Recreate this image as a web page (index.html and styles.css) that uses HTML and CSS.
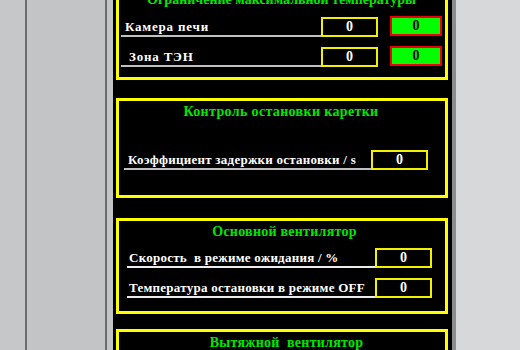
FILE: index.html
```html
<!DOCTYPE html>
<html lang="ru">
<head>
    <meta charset="UTF-8">
    <meta name="viewport" content="width=device-width, initial-scale=1.0">
    <title>Параметры печи</title>
    <link rel="stylesheet" href="styles.css">
</head>
<body>
    <div class="shell">
        <div class="gutter"></div>
        <div class="rail"></div>
        <div class="side"></div>
        <div class="rail"></div>
        <div class="pad"></div>
        <main class="panel">
            <section class="box box-limit">
                <h3 class="title">Ограничение максимальной температуры</h3>
                <div class="row">
                    <span class="label">Камера печи</span>
                    <span class="val">0</span>
                    <span class="lamp">0</span>
                </div>
                <div class="row">
                    <span class="label">&nbsp;Зона ТЭН</span>
                    <span class="val">0</span>
                    <span class="lamp">0</span>
                </div>
            </section>
            <section class="box box-stop">
                <h3 class="title">Контроль остановки каретки</h3>
                <div class="row">
                    <span class="label">Коэффициент задержки остановки / s</span>
                    <span class="val">0</span>
                </div>
            </section>
            <section class="box box-fan">
                <h3 class="title">Основной вентилятор</h3>
                <div class="row">
                    <span class="label light">Скорость &nbsp;в режиме ожидания / %</span>
                    <span class="val">0</span>
                </div>
                <div class="row">
                    <span class="label light">Температура остановки в режиме OFF</span>
                    <span class="val">0</span>
                </div>
            </section>
            <section class="box box-exhaust">
                <h3 class="title">Вытяжной &nbsp;вентилятор</h3>
            </section>
        </main>
        <div class="edge"></div>
        <div class="rest"></div>
    </div>
</body>
</html>
```

FILE: styles.css
```css
body {
    margin: 0;
    font-family: "Liberation Serif", "Times New Roman", serif;
}
.shell {
    display: flex;
    height: 350px;
    overflow: hidden;
    background: #c4c5c6;
}
.gutter {
    width: 25px;
    background: #c6c7c8;
}
.rail {
    width: 2px;
    background: #6b6c6d;
}
.side {
    width: 78px;
    background: #c3c4c5;
}
.pad {
    width: 6px;
    background: #c2c3c4;
}
.panel {
    width: 339px;
    flex: none;
    background: #000;
    padding: 0 4px 0 3px;
    box-sizing: border-box;
    overflow: hidden;
}
.edge {
    width: 4px;
    background: #8a8c8d;
}
.rest {
    flex: 1;
    background: #d6d8d9;
}

/* frames */
.box {
    border: 3px solid #ffff00;
    padding: 2px 3px 10px 2px;
}
.title {
    margin: 0;
    color: #00e800;
    font-size: 14px;
    line-height: 16px;
    font-weight: bold;
    text-align: center;
}
.row {
    display: flex;
    align-items: flex-end;
    margin-top: 9px;
    color: #fff;
    font-weight: bold;
    font-size: 13px;
    letter-spacing: 0.25px;
}
.label {
    flex: 1;
    padding: 0 0 0 4px;
    line-height: 16px;
    border-bottom: 2px solid #c0c0c0;
    white-space: pre;
}
.label.light {
    border-bottom-color: #ececec;
    padding-left: 2px;
}
.val {
    width: 57px;
    height: 20px;
    box-sizing: border-box;
    border: 2px solid #f2f200;
    text-align: center;
    line-height: 16px;
    font-size: 14px;
    letter-spacing: 0;
}
.lamp {
    width: 52px;
    height: 20px;
    box-sizing: border-box;
    margin: 0 0 1px 12px;
    border: 2px solid #ee0000;
    background: #00ff00;
    color: #000;
    text-align: center;
    line-height: 16px;
    font-size: 14px;
    letter-spacing: 0;
}

.box-limit {
    margin-top: -13px;
    margin-bottom: 18px;
}
.box-limit .row {
    letter-spacing: 0.8px;
}
.box-limit .row:first-of-type {
    margin-top: 8px;
}
.box-stop {
    margin-bottom: 20px;
    padding: 3px 17px 25px 5px;
}
.box-stop .row {
    margin-top: 30px;
}
.box-stop .title {
    padding-left: 10px;
    letter-spacing: 0.35px;
}
.box-fan .title,
.box-exhaust .title {
    padding-left: 10px;
    letter-spacing: 0.25px;
}
.box-fan {
    margin-bottom: 15px;
    padding: 3px 13px 13px 8px;
}
.box-fan .row {
    margin-top: 10px;
}
.box-fan .row:first-of-type {
    margin-top: 8px;
}
.box-exhaust {
    height: 60px;
    padding-top: 3px;
}
```
